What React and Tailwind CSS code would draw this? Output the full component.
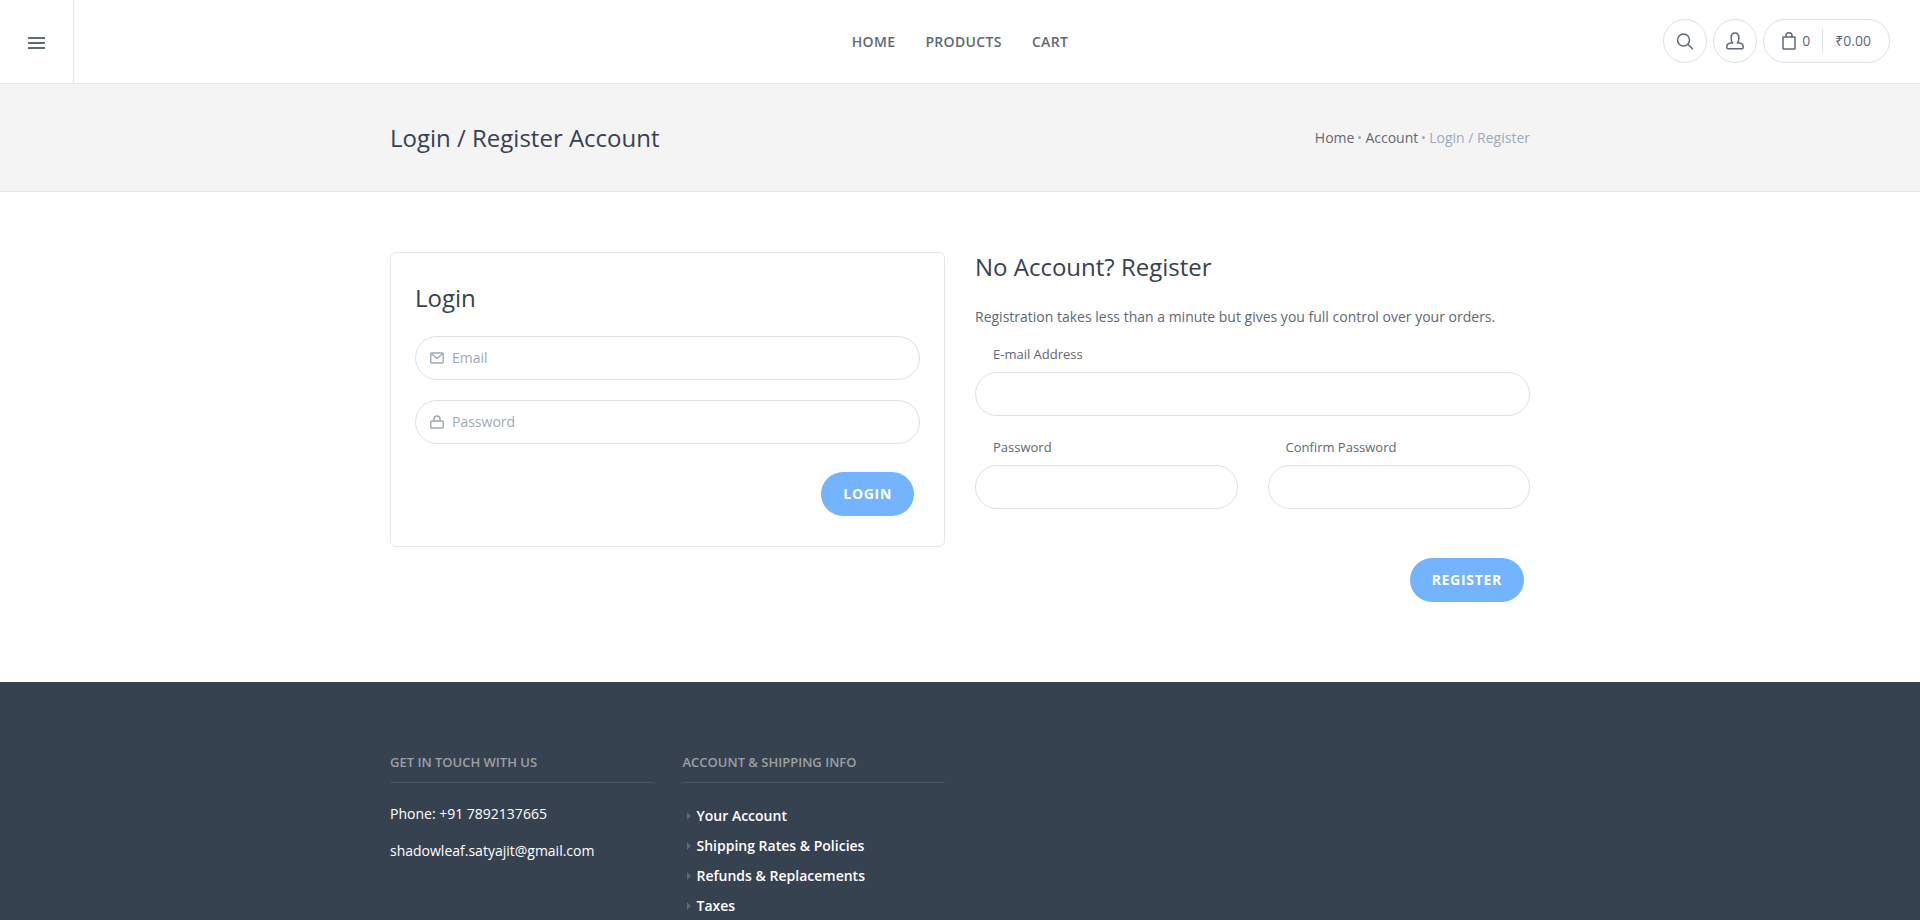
import React from "react";

const NAV = ["Home", "Products", "Cart"];
const LINKS = ["Your Account", "Shipping Rates & Policies", "Refunds & Replacements", "Taxes"];

const iconProps = {
  fill: "none",
  stroke: "currentColor",
  strokeLinecap: "round",
  strokeLinejoin: "round",
  "aria-hidden": true,
};

function MenuIcon() {
  return (
    <svg width="17" height="12" viewBox="0 0 17 12" fill="currentColor" aria-hidden="true">
      <rect y="0" width="17" height="2" rx="0.5" />
      <rect y="5" width="17" height="2" rx="0.5" />
      <rect y="10" width="17" height="2" rx="0.5" />
    </svg>
  );
}

function SearchIcon() {
  return (
    <svg width="18" height="18" viewBox="0 0 18 18" strokeWidth="1.5" {...iconProps}>
      <circle cx="7.5" cy="8" r="6" />
      <path d="M12 12.5l4.500 4.200" />
    </svg>
  );
}

function UserIcon() {
  return (
    <svg width="18" height="18" viewBox="0 0 18 18" strokeWidth="1.500" {...iconProps}>
      <path d="M6.700 10.900C5.600 10 5.100 8.200 5.100 6 5.100 2.900 6.600 1 9 1s3.900 1.900 3.900 5c0 2.200-.5 4-1.600 4.900h2.200c2.300.3 3.700 1.700 3.700 3.900v.7c0 .8-.4 1.200-1.200 1.200H2c-.8 0-1.200-.4-1.200-1.200v-.7c0-2.200 1.400-3.600 3.700-3.900z" />
    </svg>
  );
}

function BagIcon() {
  return (
    <svg width="14" height="18" viewBox="0 0 14 18" strokeWidth="1.500" {...iconProps}>
      <rect x="1" y="5" width="12" height="12" rx="0.5" />
      <path d="M4 5V3.800a3 3 0 0 1 6 0V5" />
    </svg>
  );
}

function MailIcon() {
  return (
    <svg width="14" height="12" viewBox="0 0 14 12" strokeWidth="1.400" {...iconProps}>
      <rect x="0.8" y="1" width="12.400" height="10" rx="1" />
      <path d="M2 2.200l5 4.300 5-4.300" />
    </svg>
  );
}

function LockIcon() {
  return (
    <svg width="14" height="14" viewBox="0 0 14 14" strokeWidth="1.400" {...iconProps}>
      <rect x="0.8" y="6" width="12.400" height="7" rx="1" />
      <path d="M4 6V4a3 3 0 0 1 6 0v2" />
    </svg>
  );
}

function IconField({ id, label, type, icon }) {
  return (
    <div className="flex h-11 items-center gap-2 rounded-full border border-[#dbe2e8] pl-3.5 pr-4 text-[#9da9b9]">
      <label htmlFor={id} aria-label={label}>
        {icon}
      </label>
      <input
        id={id}
        type={type}
        placeholder={label}
        className="min-w-0 flex-1 bg-transparent text-sm text-[#606975] outline-none placeholder:text-[#9da9b9]"
      />
    </div>
  );
}

function Field({ id, label, type }) {
  return (
    <div>
      <label htmlFor={id} className="block pl-4.5 text-[13px] leading-5 font-medium text-[#606975]">
        {label}
      </label>
      <input
        id={id}
        type={type}
        className="mt-2 block h-11 w-full rounded-full border border-[#dbe2e8] px-4.5 text-sm outline-none"
      />
    </div>
  );
}

function SubmitButton({ children }) {
  return (
    <button
      type="submit"
      className="mr-1.5 h-11 rounded-full bg-[#74b4ff] px-5.5 text-sm font-bold tracking-wider text-white uppercase"
    >
      {children}
    </button>
  );
}

function Header() {
  return (
    <header className="grid h-21 grid-cols-[1fr_auto_1fr] items-stretch border-b border-[#e1e7ec] text-[#606975]">
      <div className="flex">
        <button
          type="button"
          aria-label="Menu"
          className="flex w-18.5 items-center justify-center border-r border-[#e1e7ec] pt-0.5"
        >
          <MenuIcon />
        </button>
      </div>
      <nav className="flex items-center gap-7.5">
        {NAV.map((item) => (
          <a key={item} href="#" className="text-sm font-semibold tracking-wide uppercase">
            {item}
          </a>
        ))}
      </nav>
      <div className="flex items-center justify-end gap-1.5 pr-7.5 pb-0.5">
        <button
          type="button"
          aria-label="Search"
          className="flex size-11 items-center justify-center rounded-full border border-[#dbe2e8]"
        >
          <SearchIcon />
        </button>
        <a
          href="#"
          aria-label="Account"
          className="flex size-11 items-center justify-center rounded-full border border-[#dbe2e8]"
        >
          <UserIcon />
        </a>
        <a
          href="#"
          className="flex h-11 items-center rounded-full border border-[#dbe2e8] px-4.5 text-sm"
        >
          <BagIcon />
          <span className="ml-1.5">0</span>
          <span className="mx-3 h-6 border-l border-[#dbe2e8]" />
          <span>₹0.00</span>
        </a>
      </div>
    </header>
  );
}

function PageTitle() {
  return (
    <div className="border-b border-[#e1e7ec] bg-[#f4f4f4]">
      <div className="mx-auto flex h-[107px] max-w-[1140px] items-center justify-between">
        <h1 className="text-2xl font-normal text-[#374250]">Login / Register Account</h1>
        <ol className="flex items-center gap-1 text-sm text-[#9da9b9]">
          <li>
            <a href="#" className="text-[#606975]">
              Home
            </a>
          </li>
          <li aria-hidden="true" className="size-[3px] rounded-full bg-[#9da9b9]" />
          <li>
            <a href="#" className="text-[#606975]">
              Account
            </a>
          </li>
          <li aria-hidden="true" className="size-[3px] rounded-full bg-[#9da9b9]" />
          <li>Login / Register</li>
        </ol>
      </div>
    </div>
  );
}

function LoginCard() {
  return (
    <form className="rounded-md border border-[#e1e7ec] px-6 py-7.5">
      <h2 className="text-2xl leading-7.5 font-medium text-[#374250]">Login</h2>
      <div className="mt-[23px] flex flex-col gap-5">
        <IconField id="login-email" label="Email" type="email" icon={<MailIcon />} />
        <IconField id="login-password" label="Password" type="password" icon={<LockIcon />} />
      </div>
      <div className="mt-7 flex justify-end">
        <SubmitButton>Login</SubmitButton>
      </div>
    </form>
  );
}

function RegisterForm() {
  return (
    <form>
      <h2 className="text-2xl leading-7.5 font-medium text-[#374250]">No Account? Register</h2>
      <p className="mt-[25px] text-sm leading-5 text-[#606975]">
        Registration takes less than a minute but gives you full control over your orders.
      </p>
      <div className="mt-[17px] grid grid-cols-2 gap-x-7.5 gap-y-[21px]">
        <div className="col-span-2">
          <Field id="reg-email" label="E-mail Address" type="email" />
        </div>
        <Field id="reg-pass" label="Password" type="password" />
        <Field id="reg-pass-confirm" label="Confirm Password" type="password" />
      </div>
      <div className="mt-[49px] flex justify-end">
        <SubmitButton>Register</SubmitButton>
      </div>
    </form>
  );
}

function FooterHeading({ children }) {
  return (
    <h3 className="border-b border-[#4b5562] pb-2.5 text-[13px] leading-5 font-semibold text-[#9b9fa6] uppercase">
      {children}
    </h3>
  );
}

function Footer() {
  return (
    <footer className="flex-1 bg-[#374250] text-sm text-white">
      <div className="mx-auto grid max-w-[1140px] grid-cols-4 gap-7.5 pt-17.5">
        <section>
          <FooterHeading>Get in touch with us</FooterHeading>
          <p className="mt-[21px]">Phone: +91 7892137665</p>
          <p className="mt-[17px]">
            <a href="#">shadowleaf.satyajit@gmail.com</a>
          </p>
        </section>
        <section>
          <FooterHeading>Account &amp; Shipping Info</FooterHeading>
          <ul className="mt-[23px] flex flex-col gap-2.5">
            {LINKS.map((link) => (
              <li key={link} className="flex items-center gap-1.5 pl-1">
                <svg width="4" height="8" viewBox="0 0 4 8" fill="#5f6875" aria-hidden="true">
                  <path d="M0 0l4 4-4 4z" />
                </svg>
                <a href="#" className="font-semibold">
                  {link}
                </a>
              </li>
            ))}
          </ul>
        </section>
      </div>
    </footer>
  );
}

export default function App() {
  return (
    <div className="flex min-h-screen flex-col bg-white font-['Open_Sans','Noto_Sans',sans-serif]">
      <Header />
      <PageTitle />
      <main className="mx-auto grid w-full max-w-[1140px] grid-cols-2 items-start gap-7.5 pt-15 pb-20">
        <LoginCard />
        <RegisterForm />
      </main>
      <Footer />
    </div>
  );
}
